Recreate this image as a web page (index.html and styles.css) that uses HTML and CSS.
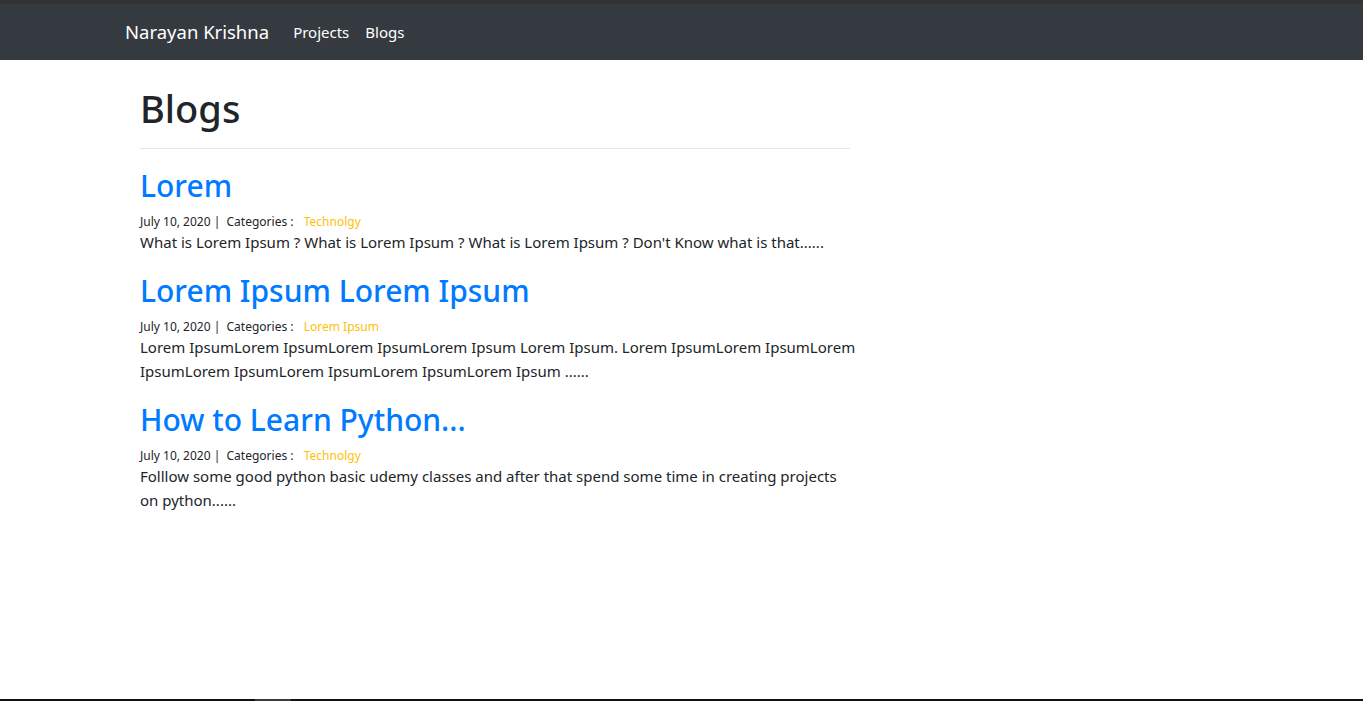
FILE: index.html
```html
<!DOCTYPE html>
<html lang="en">
<head>
<meta charset="utf-8">
<title>Blogs</title>
<link rel="stylesheet" href="styles.css">
</head>
<body>
<div class="page">
  <nav class="navbar">
    <div class="nav-inner">
      <a class="brand" href="#">Narayan Krishna</a>
      <ul class="nav-links">
        <li><a href="#">Projects</a></li>
        <li><a href="#">Blogs</a></li>
      </ul>
    </div>
  </nav>
  <main class="content">
    <h1 class="page-title">Blogs</h1>
    <hr class="divider">
    <article class="post">
      <h2 class="post-title"><a href="#">Lorem</a></h2>
      <div class="meta">July 10, 2020 |&nbsp; Categories :&nbsp; <a class="cat" href="#">Technolgy</a></div>
      <p class="excerpt">What is Lorem Ipsum ? What is Lorem Ipsum ? What is Lorem Ipsum ? Don't Know what is that......</p>
    </article>
    <article class="post">
      <h2 class="post-title"><a href="#">Lorem Ipsum Lorem Ipsum</a></h2>
      <div class="meta">July 10, 2020 |&nbsp; Categories :&nbsp; <a class="cat" href="#">Lorem Ipsum</a></div>
      <p class="excerpt">Lorem IpsumLorem IpsumLorem IpsumLorem Ipsum Lorem Ipsum. Lorem IpsumLorem IpsumLorem IpsumLorem IpsumLorem IpsumLorem IpsumLorem Ipsum ......</p>
    </article>
    <article class="post">
      <h2 class="post-title"><a href="#">How to Learn Python...</a></h2>
      <div class="meta">July 10, 2020 |&nbsp; Categories :&nbsp; <a class="cat" href="#">Technolgy</a></div>
      <p class="excerpt">Folllow some good python basic udemy classes and after that spend some time in creating projects on python......</p>
    </article>
  </main>
  <div class="bottom-edge"><span class="edge-mark"></span></div>
</div>
</body>
</html>
```

FILE: styles.css
```css
* { box-sizing: border-box; }
html, body { margin: 0; padding: 0; height: 100%; }
body {
  font-family: "Noto Sans", "Open Sans", sans-serif;
  color: #212529;
  background: #fff;
  font-size: 16px;
  line-height: 1.5;
}
.page {
  min-height: 100%;
  display: flex;
  flex-direction: column;
}
.navbar {
  background: #343a40;
  border-top: 4px solid #333333;
  height: 60px;
  display: flex;
  align-items: center;
}
.nav-inner {
  padding-left: 125px;
  display: flex;
  align-items: center;
}
.brand {
  color: #fff;
  text-decoration: none;
  font-size: 18.5px;
  margin-right: 24px;
}
.nav-links {
  list-style: none;
  margin: 0;
  padding: 0;
  display: flex;
  gap: 16px;
}
.nav-links a {
  color: #fff;
  text-decoration: none;
  font-size: 15px;
}
.content {
  width: 710px;
  margin-left: 140px;
  padding-top: 26px;
  flex: 1;
}
.page-title {
  font-size: 38px;
  font-weight: 500;
  line-height: 1.2;
  margin: 0 0 16px;
}
.divider {
  border: 0;
  border-top: 1px solid #e5e5e5;
  margin: 0 0 19px;
}
.post { margin-bottom: 19px; }
.post-title {
  font-size: 30px;
  font-weight: 500;
  line-height: 1.2;
  margin: 0 0 9px;
}
.post-title a { color: #007bff; text-decoration: none; }
.meta {
  font-size: 12px;
  line-height: 17px;
}
.cat { color: #ffc107; text-decoration: none; margin-left: 4px; }
.excerpt {
  margin: 0 -6.5px 0 0;
  font-size: 15px;
  line-height: 24px;
}
.bottom-edge {
  height: 2px;
  background: #111;
}
.edge-mark {
  display: block;
  margin-left: 255px;
  width: 36px;
  height: 2px;
  background: #3a3a3a;
}
```
